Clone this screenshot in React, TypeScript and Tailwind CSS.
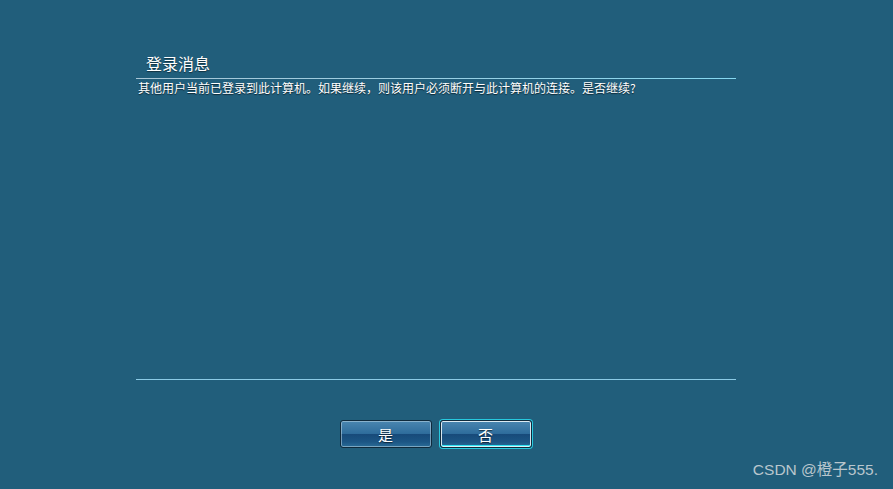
export default function App() {
  const font = { fontFamily: '"Microsoft YaHei", "Noto Sans CJK SC", sans-serif' }
  return (
    <div className="relative w-[893px] h-[489px] bg-[#215e7b] overflow-hidden" style={font}>
      <div className="flex flex-col w-[600px] ml-[136px] pt-[52px]">
        <h1 className="pl-[10px] text-[16px] leading-[22px] text-white font-normal [text-shadow:0_1px_1px_rgba(0,0,0,0.5)]">登录消息</h1>
        <div className="h-px mt-[4px] bg-gradient-to-r from-[#a9c6d6] to-[#86d8f0]" />
        <p className="pl-[2px] text-[12px] leading-[18px] text-white [text-shadow:0_1px_1px_rgba(0,0,0,0.6)]">
          其他用户当前已登录到此计算机。如果继续，则该用户必须断开与此计算机的连接。是否继续?
        </p>
        <div className="h-[282px]" />
        <div className="h-px bg-[#8ccbe6]" />
        <div className="flex justify-center gap-2 mt-[40px] pr-[1px]">
          <button className="w-[92px] h-[28px] rounded-[3px] border border-[#0f2a3c] shadow-[inset_0_0_0_1px_rgba(190,215,230,0.55)] bg-[linear-gradient(to_bottom,#4a86b0_0%,#2f6d9c_48%,#174a7a_52%,#1c5684_80%,#2a6c98_100%)] text-white text-[15px] leading-none [text-shadow:0_1px_1px_rgba(0,0,0,0.6)]">
            是
          </button>
          <button className="w-[92px] h-[28px] rounded-[3px] border border-[#0f2a3c] shadow-[inset_0_0_0_1px_rgba(235,245,250,0.9),inset_0_-2px_0_#2fe3f2,0_0_0_1px_#27c9de] bg-[linear-gradient(to_bottom,#4a86b0_0%,#2f6d9c_48%,#174a7a_52%,#1c5684_80%,#2a6c98_100%)] text-white text-[15px] leading-none [text-shadow:0_1px_1px_rgba(0,0,0,0.6)]">
            否
          </button>
        </div>
      </div>
      <div className="absolute right-[15px] bottom-[10px] text-[15.5px] leading-[18px] text-[#b9c6cd]" style={{ fontFamily: '"Liberation Sans", "Noto Sans CJK SC", sans-serif' }}>
        CSDN @橙子555.
      </div>
    </div>
  )
}
